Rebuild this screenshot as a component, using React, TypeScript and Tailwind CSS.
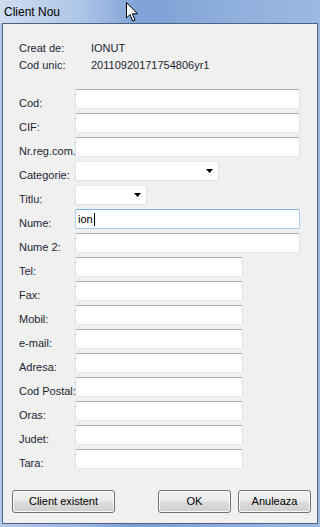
import React from 'react';

const font = { fontFamily: '"Liberation Sans", Arial, sans-serif' };

const TextBox: React.FC<{ w: string; value?: string; focused?: boolean }> = ({ w, value, focused }) => (
  <div
    className={`${w} h-[20px] bg-white rounded-[2px] border flex items-center pl-[2px] text-[11px] text-black ${
      focused
        ? 'border-[#a9cdf0] border-t-[#7eb4ea]'
        : 'border-[#dbdfe6] border-t-[#abadb3] border-b-[#e3e9ef]'
    }`}
  >
    {value && (
      <>
        <span>{value}</span>
        <span className="w-px h-[13px] bg-black ml-px"></span>
      </>
    )}
  </div>
);

const Combo: React.FC<{ w: string }> = ({ w }) => (
  <div className={`${w} h-[20px] bg-white rounded-[2px] border border-[#dbdfe6] border-t-[#e3e9ef] flex items-center justify-end pr-[5px]`}>
    <svg width="7" height="4" viewBox="0 0 7 4">
      <polygon points="0,0 7,0 3.5,4" fill="#000" />
    </svg>
  </div>
);

const Button: React.FC<{ w: string; label: string }> = ({ w, label }) => (
  <button
    className={`${w} h-[23px] rounded-[3px] border border-[#707070] text-[11px] text-black bg-[linear-gradient(to_bottom,#f2f2f2_0%,#ebebeb_48%,#dddddd_52%,#cfcfcf_100%)] shadow-[inset_0_0_0_1px_#fcfcfc]`}
  >
    {label}
  </button>
);

const fields: { label: string; kind: 'full' | 'short' | 'cat' | 'titlu'; value?: string }[] = [
  { label: 'Cod:', kind: 'full' },
  { label: 'CIF:', kind: 'full' },
  { label: 'Nr.reg.com.', kind: 'full' },
  { label: 'Categorie:', kind: 'cat' },
  { label: 'Titlu:', kind: 'titlu' },
  { label: 'Nume:', kind: 'full', value: 'ion' },
  { label: 'Nume 2:', kind: 'full' },
  { label: 'Tel:', kind: 'short' },
  { label: 'Fax:', kind: 'short' },
  { label: 'Mobil:', kind: 'short' },
  { label: 'e-mail:', kind: 'short' },
  { label: 'Adresa:', kind: 'short' },
  { label: 'Cod Postal:', kind: 'short' },
  { label: 'Oras:', kind: 'short' },
  { label: 'Judet:', kind: 'short' },
  { label: 'Tara:', kind: 'short' },
];

export default function App() {
  return (
    <div
      className="relative w-[320px] h-[527px] overflow-hidden flex flex-col bg-[linear-gradient(to_right,#b4c9e8_0%,#9cb9e2_25%,#7a9fd5_42%,#8eaedc_70%,#9ab8e2_100%)]"
      style={font}
    >
      {/* title bar */}
      <div className="h-[23px] pl-[4px] flex items-center text-[12px] text-black bg-[linear-gradient(to_right,rgba(255,255,255,0.35),rgba(255,255,255,0)_50%)]">
        Client Nou
      </div>

      {/* client area */}
      <div className="mx-[2px] h-[501px] border border-[#4d6282] bg-[#f0f0f0] flex flex-col">
        <div className="pt-[16px] pl-[16px] text-[11px] text-[#1e2532]">
          <div className="flex h-[17px] items-center">
            <span className="w-[72px]">Creat de:</span>
            <span>IONUT</span>
          </div>
          <div className="flex h-[17px] items-center">
            <span className="w-[72px]">Cod unic:</span>
            <span>20110920171754806yr1</span>
          </div>
        </div>

        <div className="mt-[15px] pl-[16px] flex flex-col gap-[4px]">
          {fields.map((f) => (
            <div key={f.label} className="flex h-[20px]">
              <span className="w-[56px] pt-[8px] text-[11px] leading-[13px] text-[#1e2532] whitespace-nowrap">
                {f.label}
              </span>
              {f.kind === 'full' && <TextBox w="w-[225px]" value={f.value} focused={!!f.value} />}
              {f.kind === 'short' && <TextBox w="w-[168px]" />}
              {f.kind === 'cat' && <Combo w="w-[144px]" />}
              {f.kind === 'titlu' && <Combo w="w-[72px]" />}
            </div>
          ))}
        </div>

        <div className="mt-[21px] pl-[9px] pr-[6px] flex">
          <Button w="w-[103px]" label="Client existent" />
          <div className="flex-1"></div>
          <Button w="w-[73px]" label="OK" />
          <div className="w-[7px]"></div>
          <Button w="w-[73px]" label="Anuleaza" />
        </div>
      </div>

      {/* mouse pointer */}
      <svg className="absolute left-[126px] top-[2px]" width="13" height="20" viewBox="0 0 13 20">
        <path d="M0.5 0.5 L0.5 16 L4 12.5 L6.8 19 L9 18 L6.4 11.8 L11.5 11.8 Z" fill="#fff" stroke="#000" strokeWidth="1" strokeLinejoin="round" />
      </svg>
    </div>
  );
}
